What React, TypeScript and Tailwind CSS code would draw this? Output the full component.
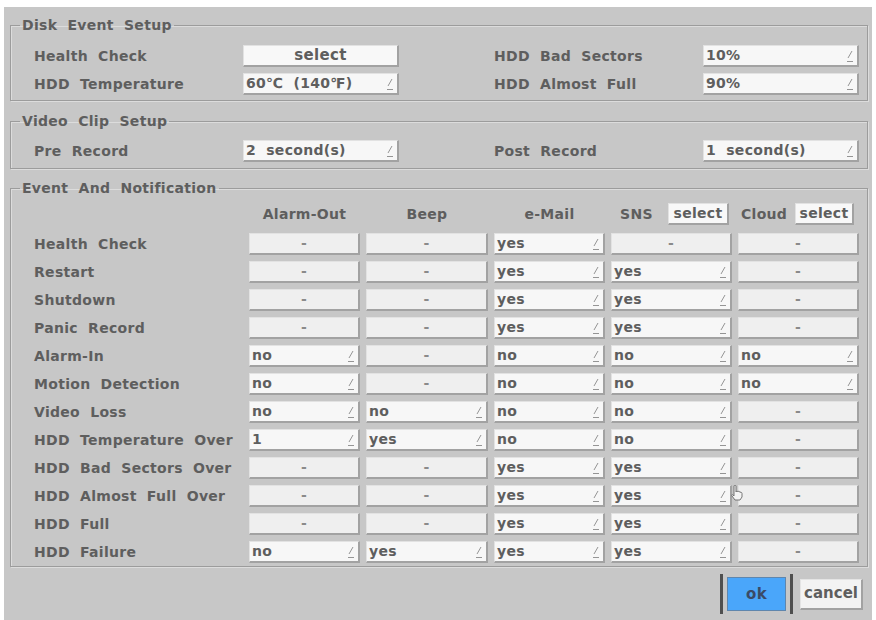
type Cell = string | null;

const rows: { label: string; cells: Cell[] }[] = [
  { label: "Health Check", cells: [null, null, "yes", null, null] },
  { label: "Restart", cells: [null, null, "yes", "yes", null] },
  { label: "Shutdown", cells: [null, null, "yes", "yes", null] },
  { label: "Panic Record", cells: [null, null, "yes", "yes", null] },
  { label: "Alarm-In", cells: ["no", null, "no", "no", "no"] },
  { label: "Motion Detection", cells: ["no", null, "no", "no", "no"] },
  { label: "Video Loss", cells: ["no", "no", "no", "no", null] },
  { label: "HDD Temperature Over", cells: ["1", "yes", "no", "no", null] },
  { label: "HDD Bad Sectors Over", cells: [null, null, "yes", "yes", null] },
  { label: "HDD Almost Full Over", cells: [null, null, "yes", "yes", null] },
  { label: "HDD Full", cells: [null, null, "yes", "yes", null] },
  { label: "HDD Failure", cells: ["no", "yes", "yes", "yes", null] },
];

const cellBox =
  "h-[22px] border-t border-l border-t-[#e2e2e2] border-l-[#e2e2e2] border-b-2 border-r-2 border-b-[#a2a2a2] border-r-[#a2a2a2]";

// little "edit" mark drawn at the right end of a dropdown box
function EditMark() {
  return (
    <svg width="8" height="14" viewBox="0 0 8 14" className="shrink-0">
      <path d="M2 9 L6 2" stroke="#959595" strokeWidth="1" fill="none" />
      <path d="M1 12.5 H7" stroke="#959595" strokeWidth="1" fill="none" />
    </svg>
  );
}

function Dropdown({ value }: { value: string }) {
  return (
    <div className={`${cellBox} bg-[#f7f7f7] flex items-center justify-between pl-[2px] pr-[3px] whitespace-nowrap`}>
      <span>{value}</span>
      <EditMark />
    </div>
  );
}

function Dash() {
  return (
    <div className={`${cellBox} bg-[#efefef] flex items-center justify-center text-[#8a8a8a]`}>-</div>
  );
}

function SelectBox({ className = "" }: { className?: string }) {
  return (
    <div className={`${cellBox} bg-[#f8f8f8] flex items-center justify-center ${className}`}>select</div>
  );
}

function Group({ title, className = "", children }: { title: string; className?: string; children: React.ReactNode }) {
  return (
    <fieldset className={`border border-[#9c9c9c] shadow-[inset_1px_1px_0_#dcdcdc,1px_1px_0_#dcdcdc] ${className}`}>
      <legend className="ml-[9px] px-[2px] leading-[16px]">{title}</legend>
      {children}
    </fieldset>
  );
}

export default function App() {
  return (
    <div className="w-[876px] h-[620px] bg-white pt-[7px] px-[4px] overflow-hidden">
      <div
        className="relative h-[613px] bg-[#c7c7c7] pl-[6px] pr-[4px] pt-[10px] text-[14px] font-bold text-[#5e5e5e] tracking-[0.3px] [word-spacing:5px]"
        style={{ fontFamily: '"DejaVu Sans", Verdana, sans-serif' }}
      >
        <Group title="Disk Event Setup" className="pt-[12px] pb-[5px]">
          <div className="grid grid-cols-[209px_156px_95px_209px_156px] gap-y-[6px] pl-[23px]">
            <div className="flex items-center">Health Check</div>
            <SelectBox className="text-[15px]" />
            <div />
            <div className="flex items-center">HDD Bad Sectors</div>
            <Dropdown value="10%" />
            <div className="flex items-center">HDD Temperature</div>
            <Dropdown value="60℃ (140℉)" />
            <div />
            <div className="flex items-center">HDD Almost Full</div>
            <Dropdown value="90%" />
          </div>
        </Group>

        <Group title="Video Clip Setup" className="mt-[12px] pt-[11px] pb-[6px]">
          <div className="grid grid-cols-[209px_156px_95px_209px_156px] pl-[23px]">
            <div className="flex items-center">Pre Record</div>
            <Dropdown value="2 second(s)" />
            <div />
            <div className="flex items-center">Post Record</div>
            <Dropdown value="1 second(s)" />
          </div>
        </Group>

        <Group title="Event And Notification" className="mt-[11px] pt-[7px] pb-[3px]">
          <div className="grid grid-cols-[209px_111px_122px_111px_121px_121px] grid-rows-[24px] gap-x-[6px] gap-y-[6px] pl-[23px]">
            <div />
            <div className="h-[22px] flex items-center justify-center">Alarm-Out</div>
            <div className="h-[22px] flex items-center justify-center">Beep</div>
            <div className="h-[22px] flex items-center justify-center">e-Mail</div>
            <div className="h-[22px] flex items-center justify-between pl-[9px] pr-[3px]">
              <span>SNS</span>
              <SelectBox className="w-[61px]" />
            </div>
            <div className="h-[22px] flex items-center justify-between pl-[3px] pr-[5px]">
              <span>Cloud</span>
              <SelectBox className="w-[59px]" />
            </div>

            {rows.map((r) => (
              <div key={r.label} className="contents">
                <div className="h-[22px] flex items-center whitespace-nowrap">{r.label}</div>
                {r.cells.map((c, i) => (c === null ? <Dash key={i} /> : <Dropdown key={i} value={c} />))}
              </div>
            ))}
          </div>
        </Group>

        <div className="flex justify-end items-center gap-[7px] mt-[7px] pr-[5px]">
          <div className="h-[40px] w-[73px] border-x-[3px] border-x-[#4f4f4f] px-[4px] py-[3px]">
            <div className="h-full bg-[#4aa6fa] border border-[#5f86ad] flex items-center justify-center text-[#3a4b66] text-[15px]">
              ok
            </div>
          </div>
          <div className="h-[31px] w-[63px] bg-[#f3f3f3] border-t border-l border-[#e4e4e4] border-b-2 border-r-2 border-b-[#a2a2a2] border-r-[#a2a2a2] flex items-center justify-center text-[15px] tracking-normal">
            cancel
          </div>
        </div>

        {/* mouse pointer resting over the grid */}
        <svg width="14" height="16" viewBox="0 0 14 16" className="absolute left-[726px] top-[478px]">
          <path
            d="M4 1 C4 0 6 0 6 1 V7 C6 6 8 6 8 7 C8 6 10 6 10 7.5 C10 7 12 7 12 8.5 V12 L10 15 H5 L2 11 C1 10 2 9 3 10 L4 11 Z"
            fill="#f4f4f4"
            stroke="#6a6a6a"
            strokeWidth="0.9"
          />
        </svg>
      </div>
    </div>
  );
}
